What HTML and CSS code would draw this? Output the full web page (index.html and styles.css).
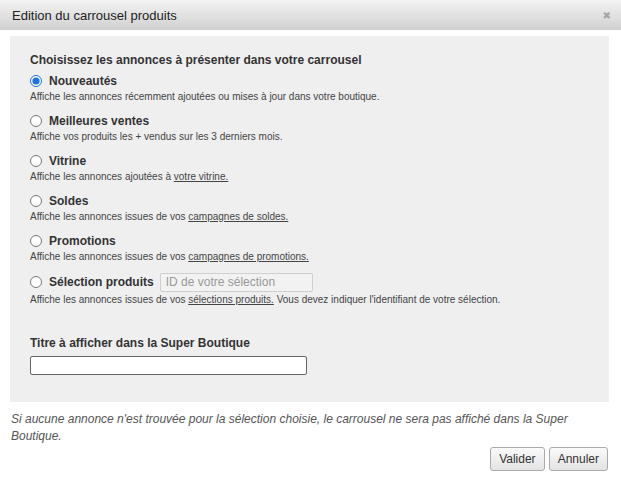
FILE: index.html
```html
<!DOCTYPE html>
<html lang="fr">
<head>
<meta charset="utf-8">
<title>Edition du carrousel produits</title>
<link rel="stylesheet" href="styles.css">
</head>
<body>
<div class="dialog">
  <div class="titlebar">
    <span class="title">Edition du carrousel produits</span>
    <span class="close">&#x2716;</span>
  </div>
  <div class="panel">
    <div class="heading">Choisissez les annonces à présenter dans votre carrousel</div>
    <div class="option">
      <label class="opt-label"><input type="radio" name="sel" checked> <span>Nouveautés</span></label>
      <div class="desc">Affiche les annonces récemment ajoutées ou mises à jour dans votre boutique.</div>
    </div>
    <div class="option">
      <label class="opt-label"><input type="radio" name="sel"> <span>Meilleures ventes</span></label>
      <div class="desc">Affiche vos produits les + vendus sur les 3 derniers mois.</div>
    </div>
    <div class="option">
      <label class="opt-label"><input type="radio" name="sel"> <span>Vitrine</span></label>
      <div class="desc">Affiche les annonces ajoutées à <a href="#">votre vitrine.</a></div>
    </div>
    <div class="option">
      <label class="opt-label"><input type="radio" name="sel"> <span>Soldes</span></label>
      <div class="desc">Affiche les annonces issues de vos <a href="#">campagnes de soldes.</a></div>
    </div>
    <div class="option">
      <label class="opt-label"><input type="radio" name="sel"> <span>Promotions</span></label>
      <div class="desc">Affiche les annonces issues de vos <a href="#">campagnes de promotions.</a></div>
    </div>
    <div class="option">
      <label class="opt-label sel-row"><input type="radio" name="sel"> <span>Sélection produits</span> <input class="sel-id" type="text" placeholder="ID de votre sélection"></label>
      <div class="desc">Affiche les annonces issues de vos <a href="#">sélections produits.</a> Vous devez indiquer l'identifiant de votre sélection.</div>
    </div>
    <div class="heading title-heading">Titre à afficher dans la Super Boutique</div>
    <input class="title-input" type="text">
  </div>
  <p class="note">Si aucune annonce n'est trouvée pour la sélection choisie, le carrousel ne sera pas affiché dans la Super Boutique.</p>
  <div class="actions">
    <button class="btn">Valider</button>
    <button class="btn">Annuler</button>
  </div>
</div>
</body>
</html>
```

FILE: styles.css
```css
html, body {
  margin: 0;
  padding: 0;
  background: #fff;
}
body {
  font-family: "Liberation Sans", Arial, sans-serif;
  color: #333;
}
.dialog {
  width: 621px;
  height: 485px;
  background: #fff;
}
.titlebar {
  height: 30px;
  display: flex;
  align-items: center;
  justify-content: space-between;
  padding: 0 10px 0 12px;
  background: linear-gradient(#f3f3f3, #d0d0d0);
  box-sizing: border-box;
}
.title {
  font-size: 13px;
  color: #222;
  padding-top: 1px;
}
.close {
  font-size: 10px;
  color: #a5a5a5;
  font-family: "DejaVu Sans", sans-serif;
}
.panel {
  margin: 6px 12px 0 10px;
  background: #efeff0;
  padding: 16px 20px 28px 20px;
  height: 366px;
  box-sizing: border-box;
}
.heading {
  font-size: 12px;
  font-weight: bold;
  line-height: 16px;
  margin-bottom: 5px;
}
.option {
  margin-bottom: 9px;
}
.opt-label {
  display: flex;
  align-items: center;
  height: 16px;
  font-size: 12px;
  font-weight: bold;
}
.opt-label input[type=radio] {
  margin: 0 7px 0 0;
  width: 12px;
  height: 12px;
  accent-color: #1a73e8;
}
.sel-row {
  height: 18px;
}
.sel-id {
  margin-left: 6px;
  width: 153px;
  height: 19px;
  box-sizing: border-box;
  border: 1px solid #cfcfcf;
  border-radius: 2px;
  background: #f2f2f3;
  font-family: "Liberation Sans", Arial, sans-serif;
  font-size: 12px;
  padding: 0 5px;
  color: #333;
}
.sel-id::placeholder {
  color: #999;
}
.desc {
  font-size: 10px;
  line-height: 14px;
  color: #444;
  margin-top: 1px;
}
.sel-row + .desc {
  margin-top: 2px;
}
.desc a {
  color: #444;
  text-decoration: underline;
}
.title-heading {
  margin-top: 28px;
  margin-bottom: 5px;
}
.title-input {
  display: block;
  width: 277px;
  height: 19px;
  box-sizing: border-box;
  border: 1px solid #666;
  border-radius: 2px;
  background: #fff;
}
.note {
  margin: 9px 20px 0 11px;
  font-size: 12px;
  line-height: 17px;
  font-style: italic;
  color: #555;
}
.actions {
  display: flex;
  justify-content: flex-end;
  gap: 4px;
  padding-right: 13px;
  margin-top: 2px;
}
.btn {
  height: 24px;
  padding: 0 8px;
  font-family: "Liberation Sans", Arial, sans-serif;
  font-size: 12px;
  color: #333;
  border: 1px solid #aaa;
  border-radius: 3px;
  background: linear-gradient(#fafafa, #e3e3e3);
}
```
